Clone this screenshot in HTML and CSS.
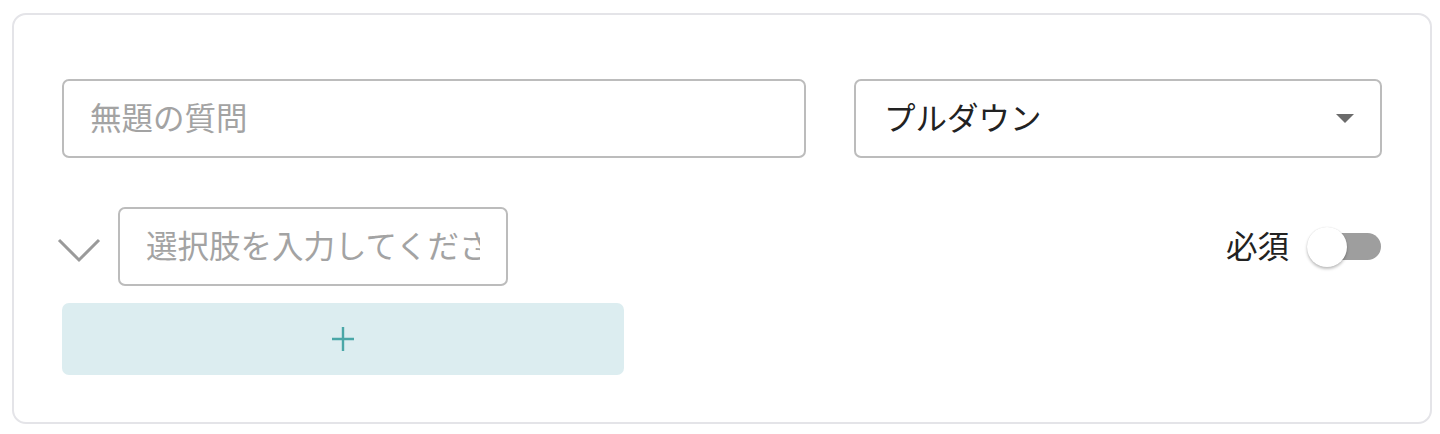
FILE: index.html
```html
<!DOCTYPE html>
<html lang="ja">
<head>
<meta charset="utf-8">
<link rel="stylesheet" href="styles.css">
</head>
<body>
<div class="card">
  <div class="row-top">
    <input class="title-input" type="text" placeholder="無題の質問">
    <div class="select">
      <span class="select-text">プルダウン</span>
      <span class="caret"></span>
    </div>
  </div>
  <div class="row-option">
    <div class="option-left">
      <svg class="chevron" width="44" height="28" viewBox="0 0 44 28"><polyline points="2,4 22,24 42,4" fill="none" stroke="#9a9a9a" stroke-width="3"/></svg>
      <input class="option-input" type="text" placeholder="選択肢を入力してください">
    </div>
    <div class="required">
      <span class="req-label">必須</span>
      <span class="switch"><span class="knob"></span></span>
    </div>
  </div>
  <button class="add-btn" type="button"><svg width="24" height="26" viewBox="0 0 24 26"><path d="M12 1V25M1 13H23" stroke="#4aa7a7" stroke-width="2.4" fill="none"/></svg></button>
</div>
</body>
</html>
```
FILE: styles.css
```css
* { box-sizing: border-box; }
html, body { margin: 0; padding: 0; background: #fff; }
body {
  font-family: "Noto Sans CJK JP", "Noto Sans", sans-serif;
  padding: 13px 8px 10px 12px;
}
.card {
  width: 1420px;
  height: 411px;
  border: 2px solid #e4e4e8;
  border-radius: 14px;
  padding: 64px 47px 46px 48px;
  background: #fff;
}
.row-top {
  display: flex;
  gap: 48px;
}
.title-input {
  width: 744px;
  height: 79px;
  border: 2px solid #bcbcbc;
  border-radius: 7px;
  padding: 0 26px 6px;
  font-family: inherit;
  font-size: 31.5px;
  color: #222;
  outline: none;
}
.title-input::placeholder, .option-input::placeholder { color: #a3a3a3; }
.select {
  width: 528px;
  height: 79px;
  border: 2px solid #bcbcbc;
  border-radius: 7px;
  padding: 0 26px 0 28px;
  display: flex;
  align-items: center;
  justify-content: space-between;
}
.select-text { font-size: 31.5px; color: #222; margin-top: -5px; }
.caret {
  width: 0; height: 0;
  border-left: 9px solid transparent;
  border-right: 9px solid transparent;
  border-top: 9px solid #6b6b6b;
}
.row-option {
  display: flex;
  align-items: center;
  justify-content: space-between;
  margin-top: 49px;
}
.option-left {
  display: flex;
  align-items: center;
  gap: 17px;
  margin-left: -5px;
}
.chevron { margin-top: 6px; }
.option-input {
  width: 390px;
  height: 79px;
  border: 2px solid #bcbcbc;
  border-radius: 7px;
  padding: 0 26px 6px;
  font-family: inherit;
  font-size: 31.5px;
  color: #222;
  outline: none;
}
.required {
  display: flex;
  align-items: center;
  gap: 18px;
  margin-right: 2px;
}
.req-label { font-size: 31.5px; color: #222; margin-top: -5px; }
.switch {
  width: 74px;
  height: 40px;
  display: flex;
  align-items: center;
  position: relative;
}
.switch::before {
  content: "";
  display: block;
  margin-left: 4px;
  width: 70px;
  height: 27px;
  border-radius: 14px;
  background: #9e9e9e;
}
.knob {
  position: absolute;
  left: 0; top: 0;
  width: 40px; height: 40px;
  border-radius: 50%;
  background: #fff;
  box-shadow: 0 2px 3px rgba(0,0,0,0.25), 0 0 1px rgba(0,0,0,0.15);
}
.add-btn {
  display: flex;
  align-items: center;
  justify-content: center;
  margin-top: 17px;
  width: 562px;
  height: 72px;
  border: none;
  border-radius: 7px;
  background: #dcedf0;
  padding: 0;
}
```
